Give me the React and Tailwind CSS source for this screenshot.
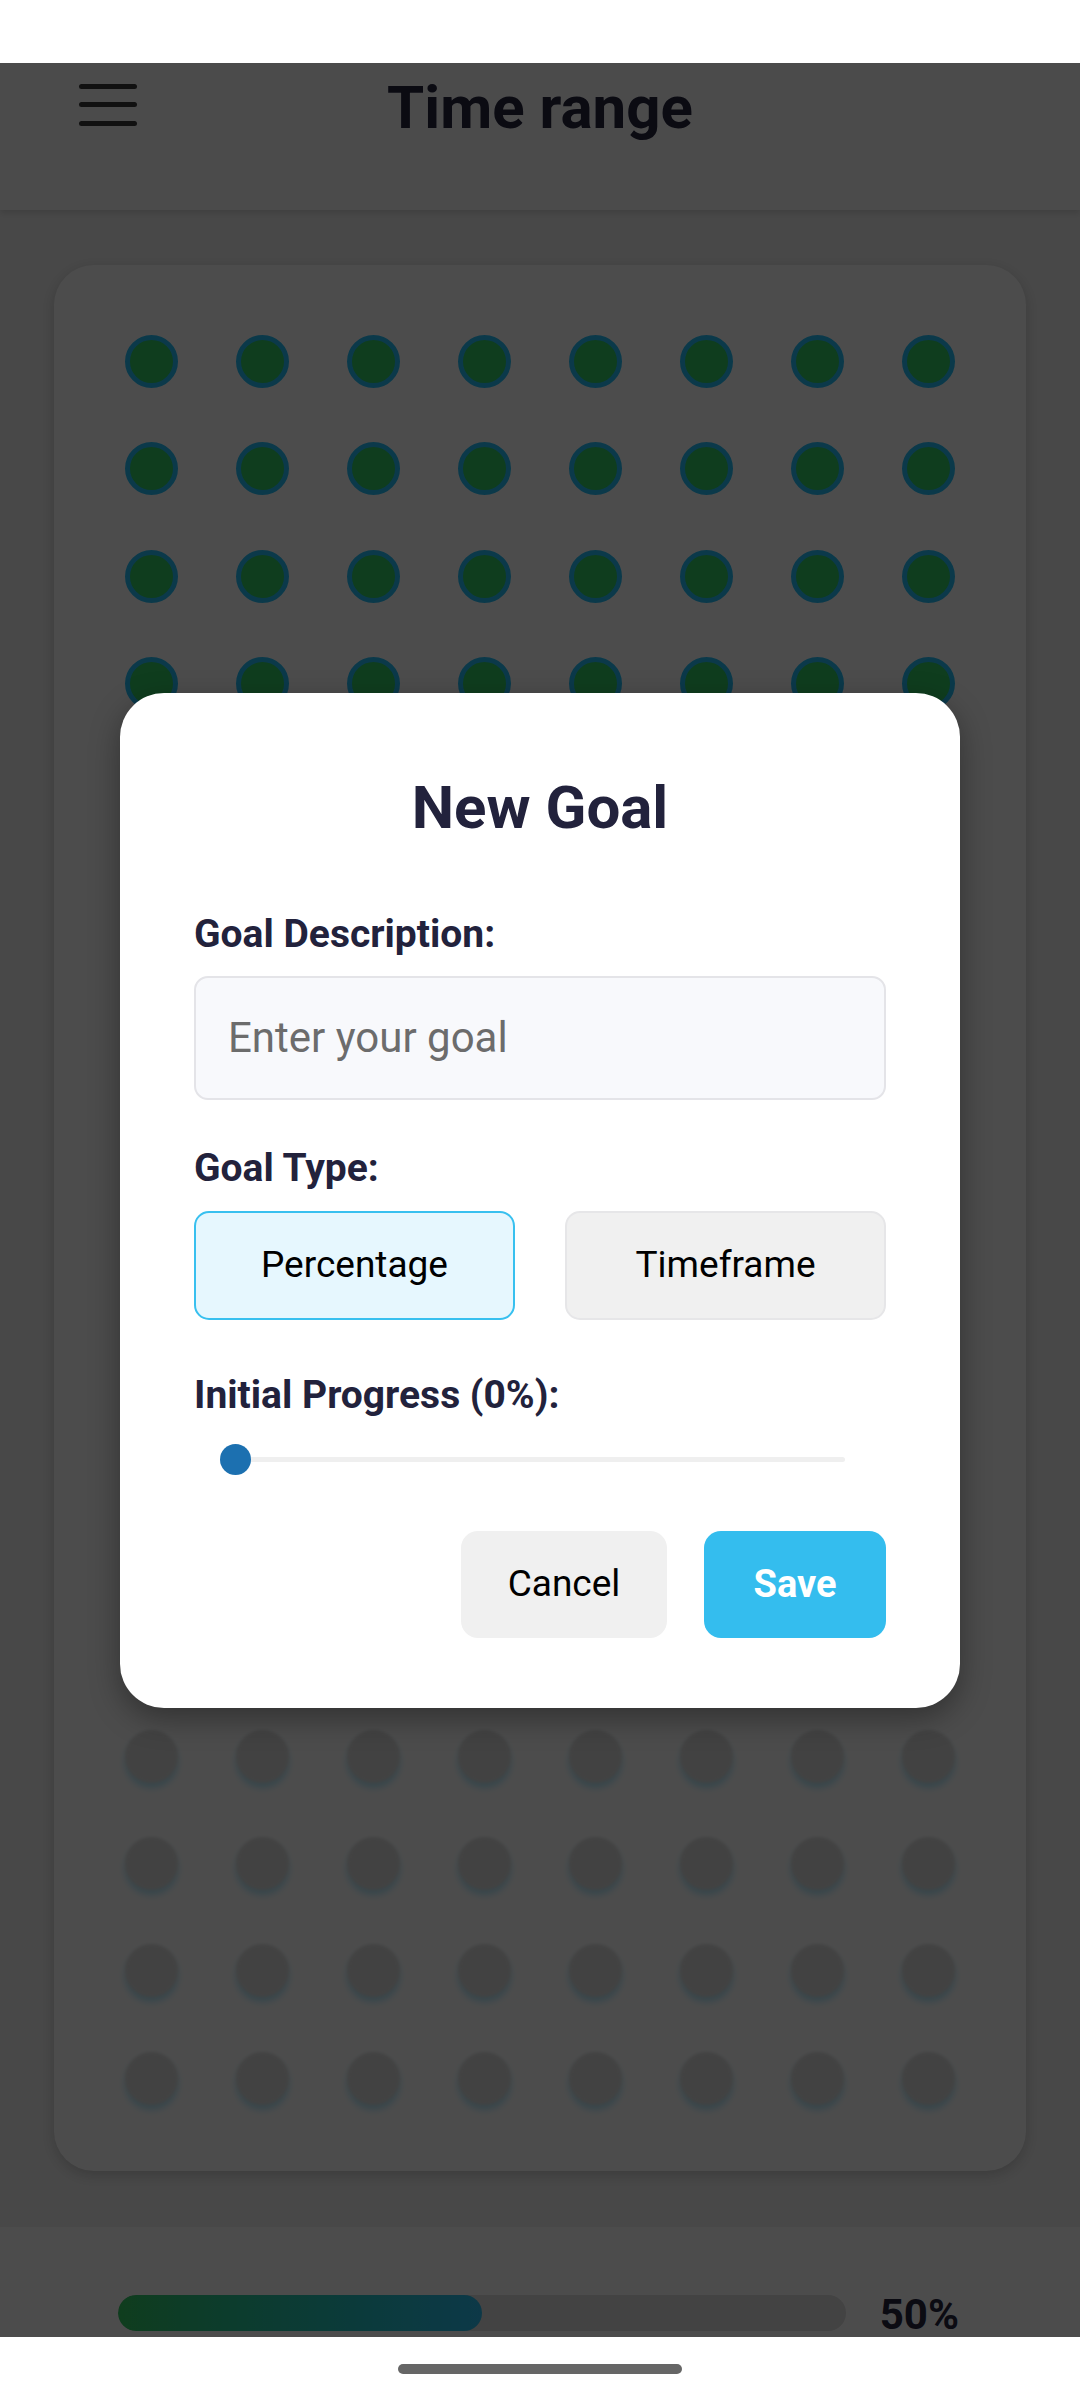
import React, { useState } from 'react';

const TOTAL_DOTS = 136;
const FILLED = 68;

const Dot = ({ filled }) => {
    if (filled) {
        return <div className="w-[53px] h-[53px] rounded-full bg-[#32cb66] border-[5px] border-[#27c0f8]"></div>;
    }
    return (
        <div className="w-[53px] h-[53px] rounded-full bg-[#dedede] blur-[1.5px] shadow-[0_5px_6px_rgba(40,190,240,0.35)]"></div>
    );
};

const App = () => {
    const [goalType, setGoalType] = useState('percentage');
    const [goal, setGoal] = useState('');

    return (
        <div className="w-[1080px] h-[2400px] flex flex-col bg-white font-['Roboto',sans-serif] overflow-hidden">
            {/* status bar */}
            <div className="h-[63px] bg-white"></div>

            {/* app */}
            <div className="relative h-[2274px] flex flex-col bg-[#f1f1f1] overflow-hidden">
                {/* header */}
                <div className="h-[147px] bg-[#fcfcfc] shadow-[0_3px_6px_rgba(0,0,0,0.12)] z-10 px-[79px] pt-[15px]">
                    <div className="grid grid-cols-[1fr_auto_1fr] items-center h-[59px]">
                        <div className="flex flex-col gap-[13.5px] w-[58px] mb-[6px]">
                            <span className="h-[5px] rounded-full bg-[#3a3a3a]"></span>
                            <span className="h-[5px] rounded-full bg-[#3a3a3a]"></span>
                            <span className="h-[5px] rounded-full bg-[#3a3a3a]"></span>
                        </div>
                        <h1 className="text-[60px] leading-[59px] font-bold text-[#25253f]">Time range</h1>
                        <div></div>
                    </div>
                </div>

                {/* dots card */}
                <div className="pt-[55px] pb-[56px] px-[54px]">
                    <div className="bg-white rounded-[40px] shadow-[0_4px_14px_rgba(0,0,0,0.18)] pt-[70px] pb-[66px] px-[71px]">
                        <div className="grid grid-cols-8 gap-x-[58px] gap-y-[54.3px]">
                            {Array.from({ length: TOTAL_DOTS }).map((_, i) => (
                                <Dot key={i} filled={i < FILLED} />
                            ))}
                        </div>
                    </div>
                </div>

                {/* progress footer */}
                <div className="flex-1 bg-white pt-[68px] pl-[118px] pr-[121px] flex items-start gap-[34px]">
                    <div className="flex-1 h-[36px] rounded-full bg-[#e0e0e0] overflow-hidden">
                        <div className="h-full w-1/2 rounded-full bg-gradient-to-r from-[#33cb64] to-[#2cbdf0]"></div>
                    </div>
                    <span className="text-[42px] leading-[36px] font-bold text-[#25253f] pt-[2px]">50%</span>
                </div>

                {/* modal */}
                <div className="absolute inset-0 z-20 bg-black/70 flex items-center justify-center">
                    <div className="w-[840px] bg-white rounded-[44px] shadow-[0_10px_30px_rgba(0,0,0,0.35)] px-[74px] pt-[85px] pb-[70px]">
                        <h2 className="text-[60px] leading-[60px] font-bold text-[#22223c] text-center">New Goal</h2>

                        <label className="block mt-[77px] text-[39px] leading-[39px] font-bold text-[#22223c]">Goal Description:</label>
                        <input
                            type="text"
                            value={goal}
                            onChange={(e) => setGoal(e.target.value)}
                            placeholder="Enter your goal"
                            className="mt-[22px] w-full h-[124px] rounded-[14px] border-2 border-[#e4e4e8] bg-[#f8f9fc] pl-[32px] text-[42px] text-[#222] placeholder:text-[#6c6c6c] outline-none"
                        />

                        <label className="block mt-[49px] text-[39px] leading-[39px] font-bold text-[#22223c]">Goal Type:</label>
                        <div className="mt-[23px] grid grid-cols-2 gap-[50px]">
                            <button
                                onClick={() => setGoalType('percentage')}
                                className={goalType === 'percentage'
                                    ? "h-[109px] rounded-[15px] border-2 border-[#38c0ef] bg-[#e6f7fe] text-[37px] text-black"
                                    : "h-[109px] rounded-[15px] border-2 border-[#e6e6e8] bg-[#f0f0f0] text-[37px] text-black"}
                            >
                                Percentage
                            </button>
                            <button
                                onClick={() => setGoalType('timeframe')}
                                className={goalType === 'timeframe'
                                    ? "h-[109px] rounded-[15px] border-2 border-[#38c0ef] bg-[#e6f7fe] text-[37px] text-black"
                                    : "h-[109px] rounded-[15px] border-2 border-[#e6e6e8] bg-[#f0f0f0] text-[37px] text-black"}
                            >
                                Timeframe
                            </button>
                        </div>

                        <label className="block mt-[56px] text-[39px] leading-[39px] font-bold text-[#22223c]">Initial Progress (0%):</label>
                        <div className="mt-[25px] h-[40px] ml-[26px] mr-[41px] relative flex items-center">
                            <div className="w-full h-[5px] rounded-full bg-[#efefef]"></div>
                            <div className="absolute left-0 top-[4.5px] w-[31px] h-[31px] rounded-full bg-[#1c70b0]"></div>
                        </div>

                        <div className="mt-[51px] flex justify-end gap-[37px]">
                            <button className="w-[206px] h-[107px] rounded-[17px] bg-[#f0f0f0] text-[37px] text-black">Cancel</button>
                            <button className="w-[182px] h-[107px] rounded-[17px] bg-[#34bdee] text-[38px] font-bold text-white">Save</button>
                        </div>
                    </div>
                </div>
            </div>

            {/* nav bar */}
            <div className="h-[63px] bg-white flex justify-center pt-[27px]">
                <div className="w-[284px] h-[10px] rounded-full bg-[#666]"></div>
            </div>
        </div>
    );
};

export default App;
